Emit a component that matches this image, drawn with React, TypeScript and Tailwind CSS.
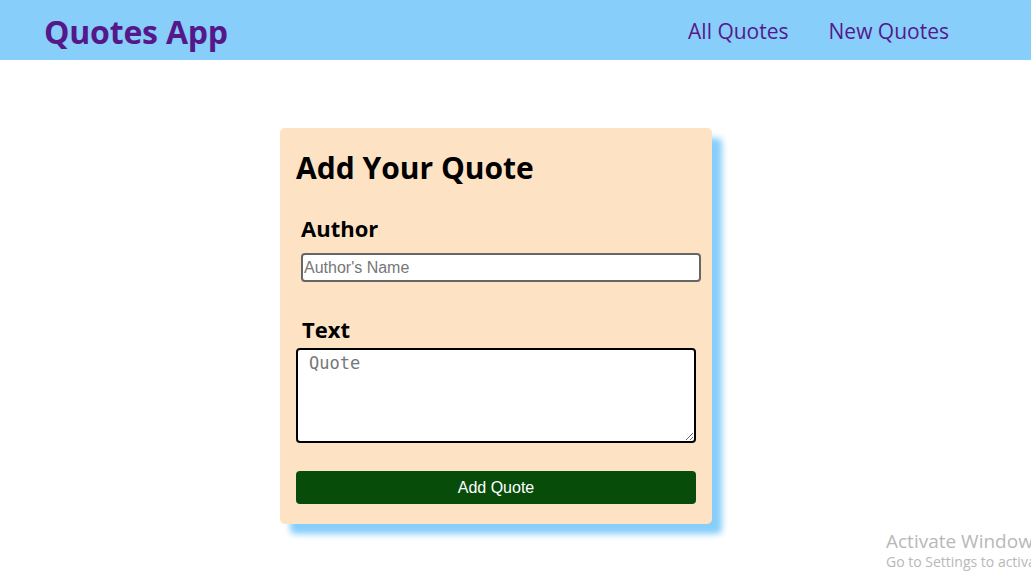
import { useState } from "react";

export default function App() {
  const [author, setAuthor] = useState("");
  const [text, setText] = useState("");

  return (
    <div className="relative min-h-[575px] overflow-hidden bg-white font-['Open_Sans',sans-serif]">
      <header className="flex h-[60px] items-center justify-between bg-[#87cefa] pt-[4px] pl-[44px] pr-[82px]">
        <h1 className="text-[32px] font-bold tracking-[-0.2px] text-[#55188b]">Quotes App</h1>
        <nav className="flex gap-[40px] text-[21px] text-[#55188b]">
          <a href="#">All Quotes</a>
          <a href="#">New Quotes</a>
        </nav>
      </header>

      <main className="pt-[68px] pl-[280px]">
        <form
          onSubmit={(e) => e.preventDefault()}
          className="w-[432px] rounded-[5px] bg-[#fde3c4] px-[16px] pt-[18px] pb-[20px] shadow-[10px_10px_6px_#87cefa]"
        >
          <h2 className="text-[30px] font-bold leading-[44px] text-black">Add Your Quote</h2>

          <div className="mt-[23px] pl-[5px]">
            <label className="block text-[22px] font-bold leading-[30px] text-black">Author</label>
            <input
              value={author}
              onChange={(e) => setAuthor(e.target.value)}
              placeholder="Author's Name"
              className="mt-[10px] block h-[29px] w-[400px] rounded-[4px] border-2 border-[#666] bg-white px-[1px] font-['Liberation_Sans',sans-serif] text-[16px] placeholder:text-[#777] outline-none"
            />
          </div>

          <div className="mt-[32px]">
            <label className="block pl-[6px] text-[22px] font-bold leading-[30px] text-black">Text</label>
            <textarea
              value={text}
              onChange={(e) => setText(e.target.value)}
              placeholder="Quote"
              className="mt-[4px] block h-[95px] w-[400px] rounded-[4px] border-2 border-black bg-white px-[11px] py-[1px] font-['DejaVu_Sans_Mono',monospace] text-[17px] placeholder:text-[#777] outline-none"
            />
          </div>

          <button
            type="submit"
            className="mt-[28px] block h-[33px] w-[400px] rounded-[4px] bg-[#084c0a] font-['Liberation_Sans',sans-serif] text-[16px] text-white"
          >
            Add Quote
          </button>
        </form>
      </main>

      <div className="absolute left-[886px] bottom-[4px] whitespace-nowrap font-['Open_Sans',sans-serif] text-[#b8b8b8]">
        <div className="text-[19px] leading-[24px]">Activate Windows</div>
        <div className="text-[14px] leading-[18px]">Go to Settings to activate Windows.</div>
      </div>
    </div>
  );
}
